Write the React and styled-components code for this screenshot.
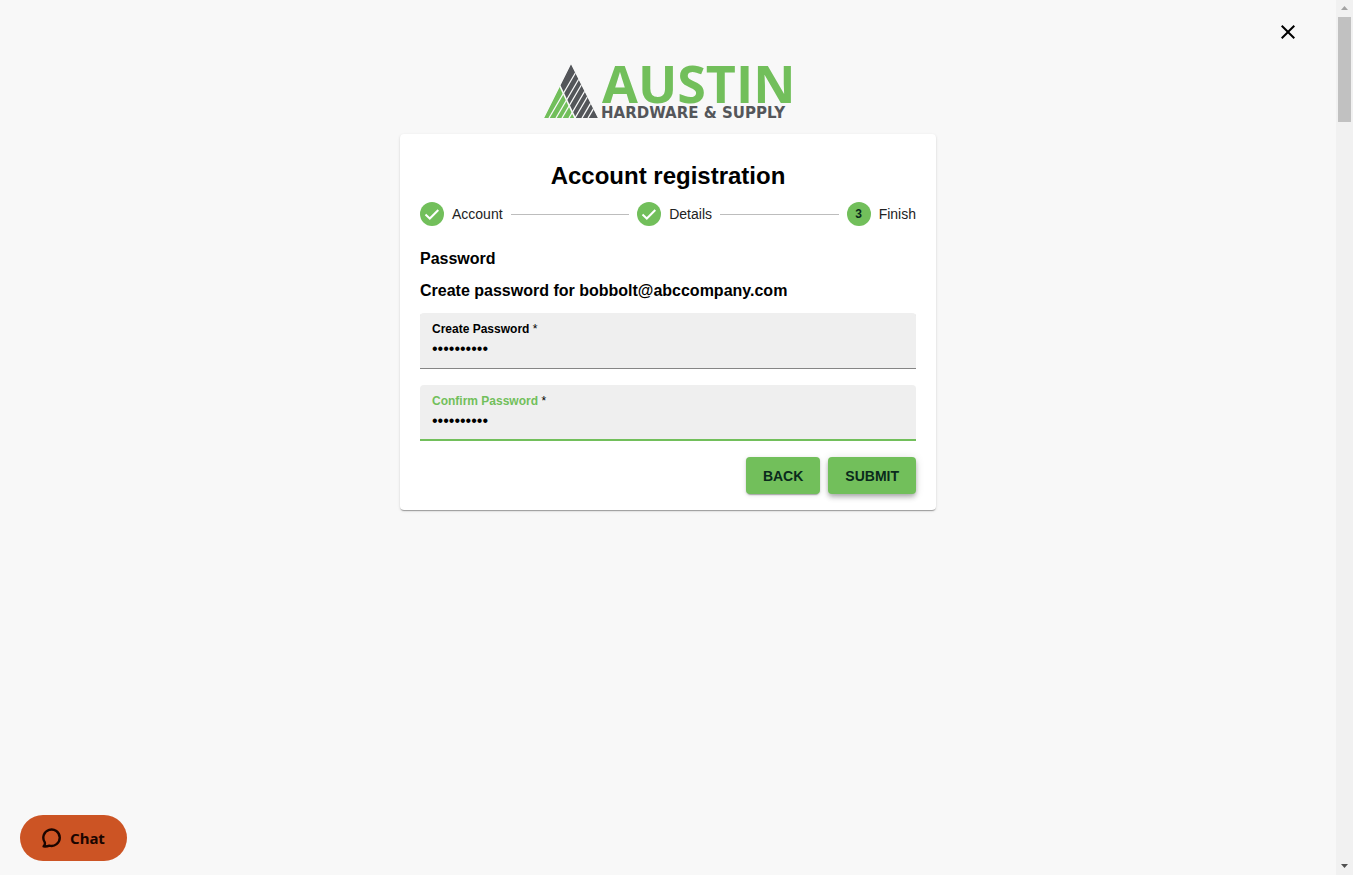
import React, { useState } from 'react';
import styled, { createGlobalStyle } from 'styled-components';
import { MdClose } from 'react-icons/md';

const STEPS = [
  { label: 'Account', done: true },
  { label: 'Details', done: true },
  { label: 'Finish', done: false },
];

function Logo() {
  return (
    <LogoSvg viewBox="0 0 250 56" role="img" aria-label="Austin Hardware & Supply">
      <clipPath id="triangle">
        <path d="M28 0 L55 54 H1 Z" />
      </clipPath>
      <g clipPath="url(#triangle)">
        <path d="M28 0 L55 54 H32 L17 22 Z" fill="#54565a" />
        <path d="M17 22 L32 54 H1 Z" fill="#72bf5b" />
        <path
          d="M6 54 L37 1 M13 54 L44 1 M19 54 L50 1 M26 54 L57 1 M32 54 L63 1 M39 54 L70 1 M45 54 L76 1"
          stroke="#f8f8f8"
          strokeWidth="1.3"
        />
        <path d="M16 20 L33 56" stroke="#f8f8f8" strokeWidth="1.6" />
      </g>
      <LogoName x="59" y="39">
        AUSTIN
      </LogoName>
      <LogoTagline x="58" y="54">
        HARDWARE &amp; SUPPLY
      </LogoTagline>
    </LogoSvg>
  );
}

function PasswordField({ id, label, value, onChange, active }) {
  return (
    <Field $active={active}>
      <FieldLabel htmlFor={id} $active={active}>
        {label} <span>*</span>
      </FieldLabel>
      <FieldInput
        id={id}
        type="password"
        autoComplete="new-password"
        required
        value={value}
        onChange={(e) => onChange(e.target.value)}
      />
    </Field>
  );
}

function App() {
  const [password, setPassword] = useState('bobbolt123');
  const [confirm, setConfirm] = useState('bobbolt123');

  return (
    <>
      <GlobalStyle />
      <Page>
        <Main>
          <CloseButton type="button" aria-label="Close">
            <MdClose />
          </CloseButton>
          <Logo />
          <Card onSubmit={(e) => e.preventDefault()}>
            <Title>Account registration</Title>
            <Stepper>
              {STEPS.map((step, idx) => (
                <Step key={step.label}>
                  <StepIcon>
                    {step.done ? (
                      <svg viewBox="0 0 24 24" aria-hidden="true">
                        <path d="M5.5 12.5 L9.8 16.5 L18.3 8" />
                      </svg>
                    ) : (
                      idx + 1
                    )}
                  </StepIcon>
                  <span>{step.label}</span>
                </Step>
              ))}
            </Stepper>
            <Heading>Password</Heading>
            <Heading>Create password for bobbolt@abccompany.com</Heading>
            <Fields>
              <PasswordField
                id="password"
                label="Create Password"
                value={password}
                onChange={setPassword}
              />
              <PasswordField
                id="confirm"
                label="Confirm Password"
                value={confirm}
                onChange={setConfirm}
                active
              />
            </Fields>
            <Actions>
              <ActionButton type="button">BACK</ActionButton>
              <ActionButton type="submit" $raised>
                SUBMIT
              </ActionButton>
            </Actions>
          </Card>
        </Main>
        <ScrollTrack aria-hidden="true">
          <ScrollArrow viewBox="0 0 17 17">
            <path d="M5 10 L8.5 6 L12 10 Z" fill="#a3a3a3" />
          </ScrollArrow>
          <ScrollThumb />
          <ScrollArrow viewBox="0 0 17 17">
            <path d="M5 6 L8.5 10 L12 6 Z" fill="#505050" />
          </ScrollArrow>
        </ScrollTrack>
      </Page>
      <ChatButton type="button">
        <svg viewBox="0 0 20 20" aria-hidden="true">
          <path d="M1.6 18.4 C3.2 17 3.2 15.8 2.7 14.2 A8.2 8.2 0 1 1 7.4 17.6 C5.6 18.4 3.8 18.6 1.6 18.4 Z" />
        </svg>
        Chat
      </ChatButton>
    </>
  );
}

const GlobalStyle = createGlobalStyle`
  * {
    box-sizing: border-box;
  }
  body {
    margin: 0;
    background-color: #f8f8f8;
    color: #000000;
    font-family: 'Liberation Sans', Arial, sans-serif;
  }
  button {
    border: none;
    cursor: pointer;
  }
`;

const Page = styled.div`
  display: flex;
  min-height: 100vh;
`;

const Main = styled.main`
  flex: 1;
  display: flex;
  flex-direction: column;
  align-items: center;
  padding: 20px;
`;

const CloseButton = styled.button`
  align-self: flex-end;
  display: flex;
  margin-right: 16px;
  padding: 0;
  background: none;
  color: #000000;
  font-size: 24px;
`;

const LogoSvg = styled.svg`
  width: 250px;
  height: 56px;
  margin-top: 20px;
  overflow: visible;
`;

const LogoName = styled.text`
  fill: #72bf5b;
  font-family: 'Open Sans', sans-serif;
  font-size: 52px;
  font-weight: 700;
`;

const LogoTagline = styled.text`
  fill: #54565a;
  font-family: 'DejaVu Sans', sans-serif;
  font-size: 15px;
  font-weight: 700;
`;

const Card = styled.form`
  width: 100%;
  max-width: 536px;
  margin-top: 14px;
  padding: 28px 20px 16px;
  background-color: #ffffff;
  border-radius: 4px;
  box-shadow: 0 2px 1px -1px rgba(0, 0, 0, 0.2),
    0 1px 1px rgba(0, 0, 0, 0.14), 0 1px 3px rgba(0, 0, 0, 0.12);
`;

const Title = styled.h1`
  margin: 0;
  font-size: 24px;
  line-height: 28px;
  font-weight: 700;
  text-align: center;
`;

const Stepper = styled.ol`
  display: flex;
  align-items: center;
  margin: 12px 0 21px;
  padding: 0;
  list-style: none;
`;

const Step = styled.li`
  display: flex;
  align-items: center;
  gap: 8px;
  color: #222222;
  font-size: 14px;

  &:not(:last-child) {
    flex: 1 1 auto;
  }
  &:not(:last-child)::after {
    content: '';
    flex: 1;
    height: 1px;
    margin-right: 8px;
    background-color: #bdbdbd;
  }
`;

const StepIcon = styled.span`
  display: flex;
  justify-content: center;
  align-items: center;
  width: 24px;
  height: 24px;
  border-radius: 50%;
  background-color: #72bf5b;
  color: #0a2a1c;
  font-size: 12px;
  font-weight: 700;
  svg {
    width: 24px;
    fill: none;
    stroke: #ffffff;
    stroke-width: 2;
  }
`;

const Heading = styled.h2`
  margin: 0 0 8px;
  font-size: 16px;
  line-height: 24px;
  font-weight: 700;
`;

const Fields = styled.div`
  display: flex;
  flex-direction: column;
  gap: 16px;
  margin-top: 10px;
`;

const Field = styled.div`
  display: flex;
  flex-direction: column;
  height: 56px;
  padding: 8px 12px;
  background-color: #efefef;
  border-radius: 4px 4px 0 0;
  box-shadow: ${({ $active }) =>
    $active ? 'inset 0 -2px 0 #72bf5b' : 'inset 0 -1px 0 #858585'};
`;

const FieldLabel = styled.label`
  color: ${({ $active }) => ($active ? '#72bf5b' : '#000000')};
  font-size: 12px;
  line-height: 16px;
  font-weight: 700;
  span {
    color: #000000;
    font-weight: 400;
  }
`;

const FieldInput = styled.input`
  width: 100%;
  height: 26px;
  padding: 0;
  border: none;
  outline: none;
  background: none;
  font-family: inherit;
  font-size: 16px;
`;

const Actions = styled.div`
  display: flex;
  justify-content: flex-end;
  gap: 8px;
  margin-top: 16px;
`;

const ActionButton = styled.button`
  height: 37px;
  padding: 0 17px;
  border-radius: 4px;
  background-color: #72bf5b;
  color: #0a2a1c;
  font-family: inherit;
  font-size: 14px;
  font-weight: 700;
  box-shadow: ${({ $raised }) =>
    $raised
      ? '0 2px 4px -1px rgba(0, 0, 0, 0.2), 0 4px 5px rgba(0, 0, 0, 0.14), 0 1px 10px rgba(0, 0, 0, 0.12)'
      : '0 3px 1px -2px rgba(0, 0, 0, 0.2), 0 1px 2px rgba(0, 0, 0, 0.14), 0 1px 5px rgba(0, 0, 0, 0.12)'};
`;

const ScrollTrack = styled.div`
  display: flex;
  flex-direction: column;
  width: 17px;
  background-color: #f1f1f1;
`;

const ScrollArrow = styled.svg`
  width: 17px;
  height: 17px;
`;

const ScrollThumb = styled.div`
  flex: 1;
  margin: 0 2px;
  background: linear-gradient(#c1c1c1, #c1c1c1) no-repeat top / 100% 105px;
`;

const ChatButton = styled.button`
  position: fixed;
  left: 20px;
  bottom: 14px;
  display: flex;
  align-items: center;
  gap: 8px;
  height: 46px;
  padding: 0 22px;
  border-radius: 23px;
  background-color: #cc5424;
  color: #1a0500;
  font-family: 'Noto Sans', sans-serif;
  font-size: 15px;
  font-weight: 700;
  svg {
    width: 20px;
    height: 20px;
    fill: none;
    stroke: #1a0500;
    stroke-width: 2.4;
    stroke-linejoin: round;
  }
`;

export default App;
